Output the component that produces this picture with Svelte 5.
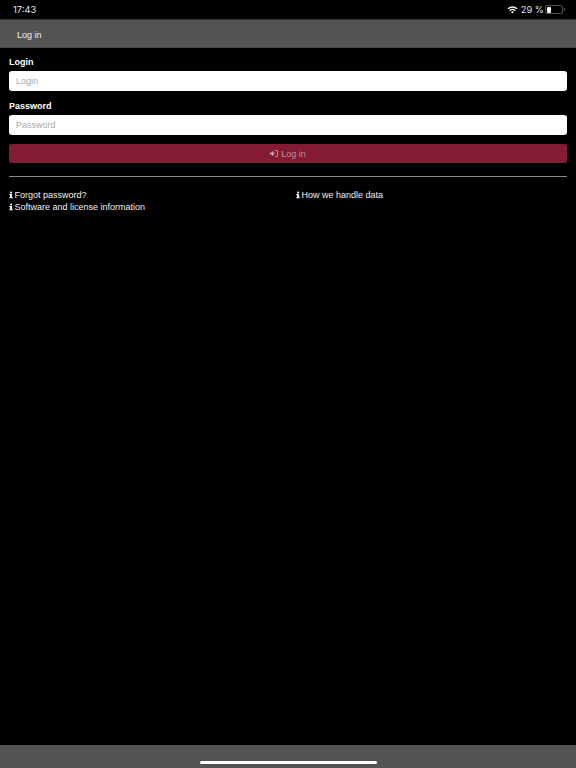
<script lang="ts">
	let login = $state('');
	let password = $state('');
</script>

{#snippet infoIcon()}
	<svg class="info" viewBox="0 0 6 10" aria-hidden="true">
		<rect x="1.6" y="0" width="3" height="2.6" />
		<path d="M0.4 3.6H4.6V8.5H5.7V10H0.4V8.5H1.5V5.1H0.4Z" />
	</svg>
{/snippet}

<div class="page">
	<div class="status">
		<span class="time">17:43</span>
		<div class="status-right">
			<svg class="wifi" viewBox="0 0 16 12" aria-hidden="true">
				<path d="M8 11.4 5.7 8.9a3.4 3.4 0 0 1 4.6 0Z" />
				<path d="M4.5 7.7 3.1 6.2a7.3 7.3 0 0 1 9.8 0L11.5 7.7a5.2 5.2 0 0 0-7 0Z" />
				<path d="M1.9 5 .4 3.5a11.2 11.2 0 0 1 15.2 0L14.1 5a9 9 0 0 0-12.2 0Z" />
			</svg>
			<span class="pct">29 %</span>
			<div class="battery"><div class="level" style="width: 29%"></div></div>
			<div class="nub"></div>
		</div>
	</div>

	<header class="navbar">Log in</header>

	<main class="content">
		<form class="form" onsubmit={(e) => e.preventDefault()}>
			<label for="login">Login</label>
			<input id="login" type="text" placeholder="Login" bind:value={login} autocomplete="off" />
			<label for="password">Password</label>
			<input id="password" type="password" placeholder="Password" bind:value={password} />
			<button type="submit">
				<svg class="signin" viewBox="0 0 12 10" aria-hidden="true">
					<path d="M0 3.4H3V1L7.2 5 3 9V6.6H0Z" />
					<path d="M7 0H10.2A1.8 1.8 0 0 1 12 1.8V8.2A1.8 1.8 0 0 1 10.2 10H7V8.8H10A.8.8 0 0 0 10.8 8V2A.8.8 0 0 0 10 1.2H7Z" />
				</svg>
				Log in
			</button>
		</form>

		<hr />

		<div class="links">
			<div class="col">
				<div class="link">{@render infoIcon()}Forgot password?</div>
				<div class="link">{@render infoIcon()}Software and license information</div>
			</div>
			<div class="col">
				<div class="link">{@render infoIcon()}How we handle data</div>
			</div>
		</div>
	</main>

	<footer class="bottom"><div class="home"></div></footer>
</div>

<style>
	:global(body) {
		margin: 0;
		background: #000;
	}
	.page {
		height: 768px;
		display: flex;
		flex-direction: column;
		background: #000;
		color: #fff;
		font-family: 'Liberation Sans', Arial, sans-serif;
		font-size: 9px;
		overflow: hidden;
	}
	.status {
		height: 19px;
		flex: none;
		display: flex;
		align-items: center;
		justify-content: space-between;
		padding: 0 11px 0 13px;
		font-family: Inter, 'Liberation Sans', sans-serif;
		font-size: 9.3px;
		color: #e6e6e6;
	}
	.status-right {
		display: flex;
		align-items: center;
	}
	.wifi {
		width: 11px;
		height: 8px;
		fill: #f2f2f2;
		margin-right: 3px;
	}
	.pct {
		margin-right: 1px;
	}
	.battery {
		width: 15px;
		height: 6px;
		border: 1px solid #555;
		border-radius: 2px;
		padding: 0.5px;
		display: flex;
	}
	.level {
		background: #fff;
		border-radius: 1px;
		min-width: 4px;
	}
	.nub {
		width: 1px;
		height: 3px;
		background: #555;
		margin-left: 1px;
	}
	.navbar {
		height: 29px;
		flex: none;
		box-sizing: border-box;
		padding: 2px 0 0 17px;
		display: flex;
		align-items: center;
		background: #545454;
		border-top: 1px solid #333;
		border-bottom: 1px solid #444;
		color: #f0f0f0;
		font-size: 9px;
	}
	.content {
		flex: 1;
		padding: 9px 9px 0;
	}
	.form {
		display: flex;
		flex-direction: column;
	}
	label {
		font-weight: bold;
		font-size: 9px;
		line-height: 11px;
		margin-bottom: 3px;
	}
	input {
		height: 20px;
		box-sizing: border-box;
		padding: 0 7px;
		margin: 0 0 10px;
		border: 0;
		border-radius: 3px;
		background: #fff;
		color: #333;
		font: inherit;
		outline: none;
	}
	input::placeholder {
		color: #a8a8a8;
		opacity: 1;
	}
	button {
		height: 19px;
		margin-top: -1px;
		padding: 0;
		border: 0;
		border-radius: 2px;
		background: #851a33;
		color: #b5929b;
		font: inherit;
		display: flex;
		align-items: center;
		justify-content: center;
		gap: 3px;
	}
	.signin {
		width: 8px;
		height: 7px;
		fill: #c4a6ae;
	}
	hr {
		margin: 13px 0 0;
		border: 0;
		height: 1px;
		background: #8c8c8c;
	}
	.links {
		display: grid;
		grid-template-columns: 287px 1fr;
		margin-top: 12px;
	}
	.link {
		display: flex;
		align-items: center;
		line-height: 12px;
		color: #f2f2f2;
	}
	.info {
		width: 4px;
		height: 8px;
		fill: #f2f2f2;
		margin-right: 1.5px;
		flex: none;
	}
	.bottom {
		height: 23px;
		flex: none;
		display: flex;
		align-items: flex-end;
		justify-content: center;
		padding-bottom: 4px;
		box-sizing: border-box;
		background: #545454;
	}
	.home {
		width: 177px;
		height: 3px;
		border-radius: 2px;
		background: #fff;
	}
</style>
